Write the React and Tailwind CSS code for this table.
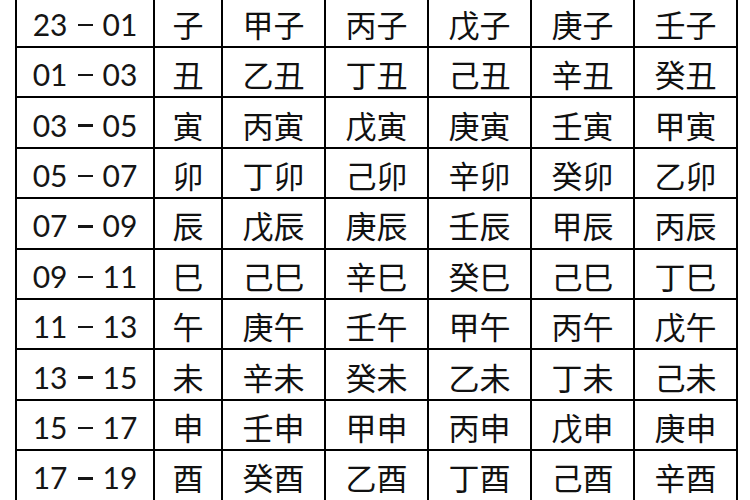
import React from "react";

const rows = [
  ["23", "01", "子", "甲子", "丙子", "戊子", "庚子", "壬子"],
  ["01", "03", "丑", "乙丑", "丁丑", "己丑", "辛丑", "癸丑"],
  ["03", "05", "寅", "丙寅", "戊寅", "庚寅", "壬寅", "甲寅"],
  ["05", "07", "卯", "丁卯", "己卯", "辛卯", "癸卯", "乙卯"],
  ["07", "09", "辰", "戊辰", "庚辰", "壬辰", "甲辰", "丙辰"],
  ["09", "11", "巳", "己巳", "辛巳", "癸巳", "己巳", "丁巳"],
  ["11", "13", "午", "庚午", "壬午", "甲午", "丙午", "戊午"],
  ["13", "15", "未", "辛未", "癸未", "乙未", "丁未", "己未"],
  ["15", "17", "申", "壬申", "甲申", "丙申", "戊申", "庚申"],
  ["17", "19", "酉", "癸酉", "乙酉", "丁酉", "己酉", "辛酉"],
];

const cjk = { fontFamily: '"Noto Sans CJK SC", "Noto Sans CJK JP", sans-serif' };
const num = { fontFamily: 'Lato, "Liberation Sans", sans-serif' };

export default function App() {
  return (
    <div className="w-[750px] h-[500px] overflow-hidden bg-white">
      <div className="ml-[15px] mt-[-4.4px] w-fit bg-black p-[2px] grid grid-cols-[136px_66px_101px_101px_101px_101px_101px] auto-rows-[48.4px] gap-[2px]">
        {rows.map((r, i) => (
          <React.Fragment key={i}>
            <div className="bg-white flex items-center justify-center pt-[5px] text-[30px] text-[#151515]" style={num}>
              <span>{r[0]}</span>
              <span className="mx-[10px] inline-block w-[15px] h-[2.5px] bg-[#151515] mt-[1px]"></span>
              <span>{r[1]}</span>
            </div>
            {r.slice(2).map((c, j) => (
              <div key={j} className="bg-white flex items-center justify-center pt-[3px] text-[31px] leading-none text-[#111]" style={cjk}>
                {c}
              </div>
            ))}
          </React.Fragment>
        ))}
      </div>
    </div>
  );
}
